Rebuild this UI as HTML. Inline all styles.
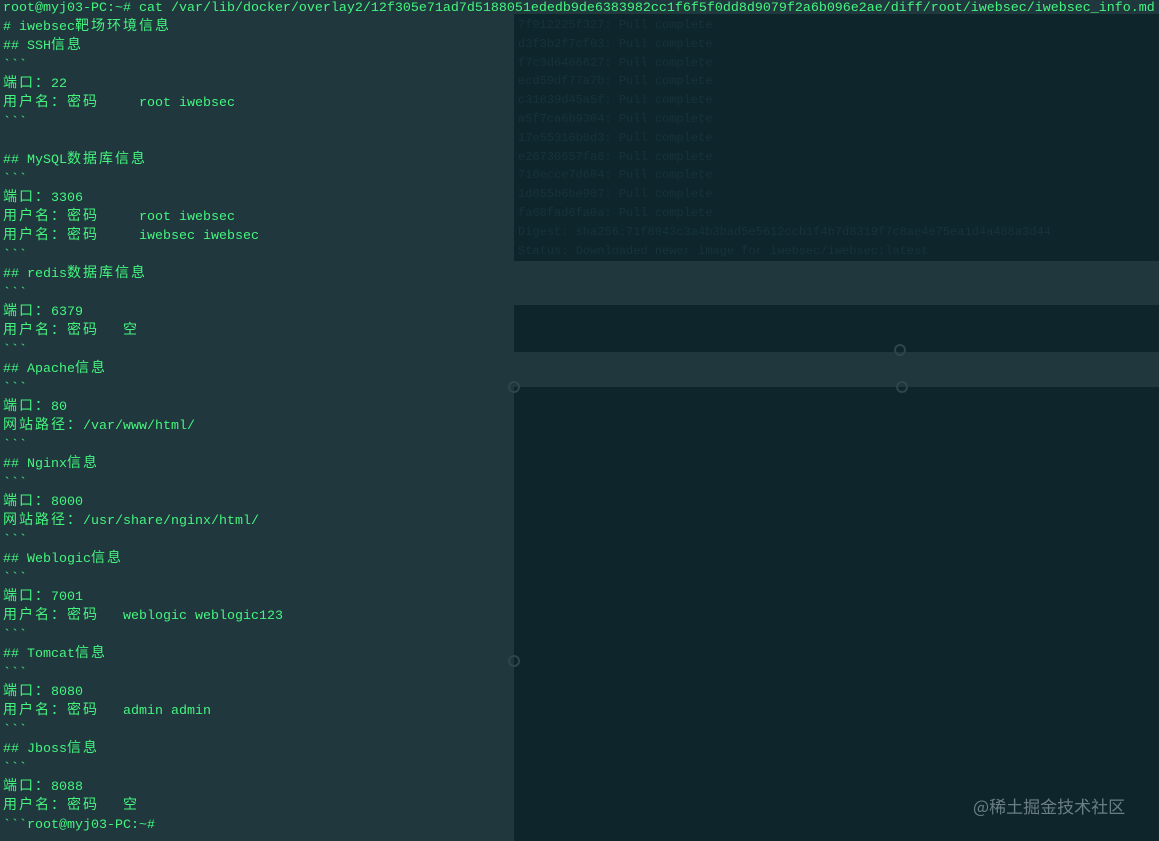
<!DOCTYPE html>
<html><head><meta charset="utf-8"><style>
html,body{margin:0;padding:0;width:1159px;height:841px;overflow:hidden}
body{background:#1f373d;position:relative;font-family:"Liberation Mono","Noto Sans CJK SC",monospace;}
.blk{position:absolute;left:514px;right:0;background:#0e252c}
.ft{position:absolute;left:518px;color:#17323a;font-size:12px;line-height:18.8px;white-space:pre;font-family:"Liberation Mono",monospace}
pre{position:absolute;left:3px;top:-1px;margin:0;font-size:13.33px;line-height:19px;color:#45f57f;font-family:"Liberation Mono",monospace;white-space:pre}
.c{font-family:"Noto Sans CJK SC",sans-serif;font-size:14px;letter-spacing:2px;line-height:0}
.wm{position:absolute;left:973px;top:794px;color:#6a7f85;font-size:17px;line-height:24px;font-family:"Noto Sans CJK SC",sans-serif}
.dot{position:absolute;width:8px;height:8px;border-radius:50%;border:2px solid #2c464c}
</style></head><body>
<div class="blk" style="top:14px;height:247px"></div>
<div class="blk" style="top:305px;height:47px"></div>
<div class="blk" style="top:387px;height:454px"></div>
<div class="ft" style="top:16px">7f912225f327: Pull complete
d3f3b2f7cf03: Pull complete
f7c3d6406627: Pull complete
ecd59df77a7b: Pull complete
c31839d45a5f: Pull complete
a5f7ca6b9304: Pull complete
17e55316b0d3: Pull complete
e26730657fa6: Pull complete
710ecce7d604: Pull complete
1d055b6be907: Pull complete
fa68fad6fa0a: Pull complete
Digest: sha256:71f8043c3a4b3bad5e5612ccb1f4b7d8319f7c8ae4e75ea1d4a488a3d44
Status: Downloaded newer image for iwebsec/iwebsec:latest</div>
<div class="dot" style="left:894px;top:344px"></div>
<div class="dot" style="left:508px;top:381px"></div>
<div class="dot" style="left:896px;top:381px"></div>
<div class="dot" style="left:508px;top:655px"></div>
<pre>root@myj03-PC:~# cat /var/lib/docker/overlay2/12f305e71ad7d5188051ededb9de6383982cc1f6f5f0dd8d9079f2a6b096e2ae/diff/root/iwebsec/iwebsec_info.md
# iwebsec<span class="c">靶场环境信息</span>
## SSH<span class="c">信息</span>
&#96;&#96;&#96;
<span class="c">端口：</span>22
<span class="c">用户名：密码</span>     root iwebsec
&#96;&#96;&#96;

## MySQL<span class="c">数据库信息</span>
&#96;&#96;&#96;
<span class="c">端口：</span>3306
<span class="c">用户名：密码</span>     root iwebsec
<span class="c">用户名：密码</span>     iwebsec iwebsec
&#96;&#96;&#96;
## redis<span class="c">数据库信息</span>
&#96;&#96;&#96;
<span class="c">端口：</span>6379
<span class="c">用户名：密码</span>   <span class="c">空</span>
&#96;&#96;&#96;
## Apache<span class="c">信息</span>
&#96;&#96;&#96;
<span class="c">端口：</span>80
<span class="c">网站路径：</span>/var/www/html/
&#96;&#96;&#96;
## Nginx<span class="c">信息</span>
&#96;&#96;&#96;
<span class="c">端口：</span>8000
<span class="c">网站路径：</span>/usr/share/nginx/html/
&#96;&#96;&#96;
## Weblogic<span class="c">信息</span>
&#96;&#96;&#96;
<span class="c">端口：</span>7001
<span class="c">用户名：密码</span>   weblogic weblogic123
&#96;&#96;&#96;
## Tomcat<span class="c">信息</span>
&#96;&#96;&#96;
<span class="c">端口：</span>8080
<span class="c">用户名：密码</span>   admin admin
&#96;&#96;&#96;
## Jboss<span class="c">信息</span>
&#96;&#96;&#96;
<span class="c">端口：</span>8088
<span class="c">用户名：密码</span>   <span class="c">空</span>
&#96;&#96;&#96;root@myj03-PC:~#</pre>
<div class="wm">@稀土掘金技术社区</div>
</body></html>
